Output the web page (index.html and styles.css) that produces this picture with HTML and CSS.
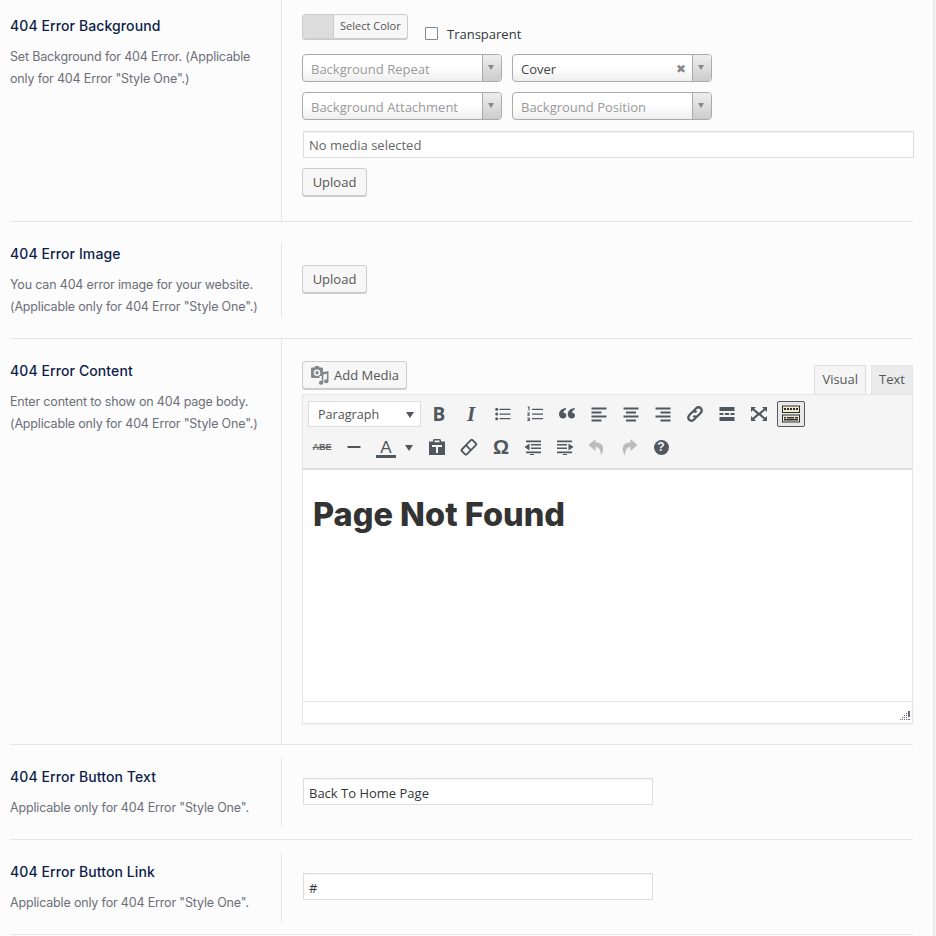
FILE: index.html
```html
<!DOCTYPE html>
<html lang="en">
<head>
  <meta charset="UTF-8">
  <meta name="viewport" content="width=device-width, initial-scale=1.0">
  <title>404 Error Settings</title>
  <link rel="stylesheet" href="styles.css">
</head>
<body>
  <div class="page">

    <section class="row row-background">
      <div class="label">
        <h3>404 Error Background</h3>
        <p>Set Background for 404 Error. (Applicable only for 404 Error "Style One".)</p>
      </div>
      <div class="field">
        <div class="color-line">
          <div class="color-button"><span class="swatch"></span><span class="color-text">Select Color</span></div>
          <label class="check"><span class="checkbox"></span>Transparent</label>
        </div>
        <div class="select-grid">
          <div class="select placeholder"><span class="select-text">Background Repeat</span><span class="select-arrow"></span></div>
          <div class="select"><span class="select-text">Cover</span><span class="select-clear">✖</span><span class="select-arrow"></span></div>
          <div class="select placeholder"><span class="select-text">Background Attachment</span><span class="select-arrow"></span></div>
          <div class="select placeholder"><span class="select-text">Background Position</span><span class="select-arrow"></span></div>
        </div>
        <div class="input input-full muted">No media selected</div>
        <button class="btn">Upload</button>
      </div>
    </section>

    <section class="row row-image">
      <div class="label">
        <h3>404 Error Image</h3>
        <p>You can 404 error image for your website. (Applicable only for 404 Error "Style One".)</p>
      </div>
      <div class="field field-center">
        <button class="btn">Upload</button>
      </div>
    </section>

    <section class="row row-content">
      <div class="label">
        <h3>404 Error Content</h3>
        <p>Enter content to show on 404 page body. (Applicable only for 404 Error "Style One".)</p>
      </div>
      <div class="field field-editor">
        <div class="editor-top">
          <button class="btn btn-media">
            <svg class="media-icon" viewBox="0 0 20 20"><path d="M13 11V3.500a1 1 0 0 0-1-1H9.600L8.600 1H5.400l-1 1.500H2a1 1 0 0 0-1 1V12a1 1 0 0 0 1 1h7.500v-2zM7 11a3.300 3.300 0 1 1 0-6.600A3.300 3.300 0 0 1 7 11z"/><circle cx="7" cy="7.700" r="1.700"/><path d="M18.500 5.500v10.300a2.200 2 0 1 1-1.600-1.900V8.200l-3.600.8v8.300a2.200 2 0 1 1-1.600-1.900v-4l.2-4.600z" transform="translate(0 .5)"/></svg>
            Add Media
          </button>
          <div class="tabs">
            <span class="tab tab-active">Visual</span>
            <span class="tab">Text</span>
          </div>
        </div>
        <div class="toolbar">
          <div class="tool-row">
            <div class="format-select">Paragraph<span class="format-arrow"></span></div>
            <span class="tool tool-b">B</span>
            <span class="tool tool-i">I</span>
            <span class="tool"><svg viewBox="0 0 20 20"><path d="M6.500 4.700h11V6h-11zM6.500 9.400h11v1.300h-11zM6.500 14h11v1.300h-11z"/><circle cx="3.700" cy="5.300" r="1.500"/><circle cx="3.700" cy="10" r="1.500"/><circle cx="3.700" cy="14.700" r="1.500"/></svg></span>
            <span class="tool"><svg viewBox="0 0 20 20"><path d="M7 4.700h11V6H7zM7 9.400h11v1.300H7zM7 14h11v1.300H7z"/><path d="M3 2.500h1.500v4H3.400V3.800H2.600zM2.300 8.500h2.500v1l-1.300 1.200h1.300v1H2.300v-1l1.300-1.200H2.300zM2.300 13.500h2.500V17H2.300v-.9h1.400v-.4H2.800v-.8h.9v-.5H2.300z"/></svg></span>
            <span class="tool"><svg viewBox="0 0 20 20"><path d="M9 4v1.600C7.300 6.300 6.500 7.400 6.300 8.800 8 8.500 9.300 9.800 9.300 11.500c0 1.800-1.400 3.100-3.200 3.100C3.900 14.600 2 12.900 2 10.300 2 7 4.800 4.500 9 4zM17.700 4v1.600c-1.700.7-2.500 1.800-2.700 3.200 1.700-.3 3 1 3 2.700 0 1.800-1.400 3.100-3.200 3.100-2.200 0-4.100-1.700-4.100-4.300 0-3.300 2.800-5.800 7-6.300z"/></svg></span>
            <span class="tool"><svg viewBox="0 0 20 20"><path d="M2.500 3.500h15v2h-15zM2.500 7.500h10v2h-10zM2.500 11.500h15v2h-15zM2.500 15.500h10v2h-10z"/></svg></span>
            <span class="tool"><svg viewBox="0 0 20 20"><path d="M2.500 3.500h15v2h-15zM5 7.500h10v2H5zM2.500 11.500h15v2h-15zM5 15.500h10v2H5z"/></svg></span>
            <span class="tool"><svg viewBox="0 0 20 20"><path d="M2.500 3.500h15v2h-15zM7.500 7.500h10v2h-10zM2.500 11.500h15v2h-15zM7.500 15.500h10v2h-10z"/></svg></span>
            <span class="tool"><svg class="line line-heavy" viewBox="0 0 20 20"><path d="M8.300 7.200l2.900-3a3.200 3.200 0 0 1 4.600 4.600l-2.900 2.900a3.200 3.200 0 0 1-4.500 0"/><path d="M11.700 12.800l-2.900 3a3.200 3.200 0 0 1-4.600-4.600l2.900-2.900a3.200 3.200 0 0 1 4.500 0"/></svg></span>
            <span class="tool"><svg viewBox="0 0 20 20"><path d="M2.500 3h15v4h-15zM2.500 13h15v4h-15z"/><path d="M2.500 9h4v2h-4zM8 9h4v2H8zM13.500 9h4v2h-4z"/></svg></span>
            <span class="tool"><svg viewBox="0 0 20 20"><path d="M2 3h5L5.200 4.800 10 8.800 14.800 4.800 13 3h5v5l-1.800-1.800L12 10l4.200 3.800L18 12v5h-5l1.800-1.800L10 11.200 5.200 15.200 7 17H2v-5l1.800 1.800L8 10 3.800 6.200 2 8z"/></svg></span>
            <span class="tool tool-active"><svg viewBox="0 0 20 20"><path d="M1 1.500h18v7.500H1zM1 10.500h18v8H1z" fill="#2b2f33"/><path d="M2 2.500h16v5.500H2zM2 11.500h16v6H2z" fill="#f5e9c8"/><path d="M3 4h2v2H3zM6 4h2v2H6zM9 4h2v2H9zM12 4h2v2h-2zM15 4h2v2h-2zM3 13h2v1.500H3zM6 13h7v1.500H6zM14 13h3v1.500h-3zM3 15h14v1.500H3z" fill="#2b2f33"/></svg></span>
          </div>
          <div class="tool-row">
            <span class="tool tool-abe">ABE</span>
            <span class="tool"><svg viewBox="0 0 20 20"><path d="M3.500 9h13v2h-13z"/></svg></span>
            <span class="tool tool-color">A</span>
            <span class="color-arrow"></span>
            <span class="tool"><svg viewBox="0 0 20 20"><path d="M2 4.500h4v-1C6 2.700 6.700 2 7.500 2h5c.8 0 1.500.7 1.500 1.500v1h4V18H2z"/><path d="M7.500 3.400h5v1.800h-5zM5 8h10v2h-4v6H9v-6H5z" fill="#f5f5f5"/></svg></span>
            <span class="tool"><svg class="line" viewBox="0 0 20 20"><path d="M2.800 12.500l9-9.300c.6-.5 1.300-.5 1.800 0l3.300 3.300c.5.5.5 1.200 0 1.700l-9.200 9.100c-.4.4-1.100.4-1.600 0l-3.300-3.300c-.5-.5-.5-1.100 0-1.500z"/><path d="M7 8.200l5 5.200"/></svg></span>
            <span class="tool tool-omega">Ω</span>
            <span class="tool"><svg viewBox="0 0 20 20"><path d="M3 3.500h15v1.800H3zM8 7h10v1.500H8zM8 10.500h10V12H8zM3 14.500h15v1.800H3zM7 17h4v1H7zM6.500 6.500v7L1.500 10z"/></svg></span>
            <span class="tool"><svg viewBox="0 0 20 20"><path d="M2 3.500h15v1.800H2zM2 7h10v1.500H2zM2 10.500h10V12H2zM2 14.500h15v1.800H2zM8 17h4v1H8zM13.500 6.500v7l5-3.500z"/></svg></span>
            <span class="tool tool-off"><svg viewBox="0 0 20 20"><path d="M8.500 2L1.500 8l7 6v-4c3.300 0 5 2 5.500 8.500 3.500-5 3.800-13-5.500-13z"/></svg></span>
            <span class="tool tool-off"><svg viewBox="0 0 20 20"><path d="M11.500 2l7 6-7 6v-4C8.200 10 6.500 12 6 18.500 2.500 13.500 2.200 5.500 11.500 5.500z"/></svg></span>
            <span class="tool"><span class="help">?</span></span>
          </div>
        </div>
        <div class="editor-body">
          <h1>Page Not Found</h1>
        </div>
        <div class="editor-status">
          <svg class="resize" viewBox="0 0 10 10"><path d="M8 0h2v2H8zM6 2h1v1H6zM8 2h2v2H8zM4 4h1v1H4zM6 4h1v1H6zM8 4h2v2H8zM2 6h1v1H2zM4 6h1v1H4zM6 6h1v1H6zM0 8h1v1H0zM2 8h1v1H2zM4 8h1v1H4zM6 8h1v1H6zM8 8h2v1H8z"/></svg>
        </div>
      </div>
    </section>

    <section class="row row-text">
      <div class="label">
        <h3>404 Error Button Text</h3>
        <p>Applicable only for 404 Error "Style One".</p>
      </div>
      <div class="field field-center">
        <div class="input input-half">Back To Home Page</div>
      </div>
    </section>

    <section class="row row-text">
      <div class="label">
        <h3>404 Error Button Link</h3>
        <p>Applicable only for 404 Error "Style One".</p>
      </div>
      <div class="field field-center">
        <div class="input input-half">#</div>
      </div>
    </section>

  </div>
</body>
</html>
```

FILE: styles.css
```css
* {
  box-sizing: border-box;
}

body {
  margin: 0;
  background-color: #f1f1f1;
  font-family: "Open Sans", sans-serif;
  font-size: 13px;
  color: #32373c;
}

.page {
  width: 934px;
  height: 936px;
  padding: 0 20px 0 10px;
  background-color: #fcfcfc;
  border-right: 1px solid #e5e5e5;
  overflow: hidden;
}

/* rows */
.row {
  display: flex;
  border-bottom: 1px solid #e6e6e6;
}

.row-background {
  height: 222px;
}

.row-image {
  height: 117px;
  padding: 20px 0;
}

.row-content {
  height: 406px;
}

.row-text {
  height: 95px;
  padding: 12px 0;
}

.label {
  width: 272px;
  flex-shrink: 0;
  padding-right: 14px;
  border-right: 1px solid #e6e6e6;
}

.row-background .label {
  padding-top: 15px;
}

.row-image .label {
  padding-top: 1px;
}

.row-content .label {
  padding-top: 21px;
}

.row-text .label {
  padding-top: 9px;
}

.label h3 {
  margin: 0 0 9px;
  font-family: Inter, sans-serif;
  font-size: 14px;
  font-weight: 500;
  line-height: 22px;
  letter-spacing: 0.1px;
  color: #0e1d4a;
}

.label p {
  margin: 0;
  font-family: Inter, sans-serif;
  font-size: 12.500px;
  line-height: 22px;
  letter-spacing: -0.17px;
  color: #6d6e78;
}

.field {
  flex: 1;
  padding-left: 20px;
}

.field-center {
  display: flex;
  align-items: center;
  padding-bottom: 2px;
}

.row-background .field {
  padding-top: 14px;
}

/* color picker line */
.color-line {
  display: flex;
  align-items: flex-start;
  height: 26px;
}

.color-button {
  display: flex;
  width: 106px;
  height: 25px;
  background-color: #f7f7f7;
  border: 1px solid #ccc;
  border-radius: 3px;
  box-shadow: 0 1px 0 #ccc;
  overflow: hidden;
}

.swatch {
  width: 31px;
  background-color: #dcdcdc;
  border-right: 1px solid #ccc;
}

.color-text {
  padding-left: 6px;
  font-size: 11px;
  line-height: 22px;
  color: #555;
}

.check {
  display: flex;
  align-items: center;
  height: 13px;
  margin: 13px 0 0 17px;
  color: #32373c;
}

.checkbox {
  width: 13px;
  height: 13px;
  margin-right: 9px;
  background-color: #fff;
  border: 1px solid #7e8993;
  border-radius: 1px;
}

/* selects */
.select-grid {
  display: grid;
  grid-template-columns: 200px 200px;
  gap: 10px;
  margin-top: 14px;
}

.select {
  display: flex;
  align-items: center;
  height: 28px;
  padding-left: 8px;
  background: linear-gradient(#fff 50%, #eee);
  border: 1px solid #aaa;
  border-radius: 4px;
  font-size: 13px;
  color: #444;
  overflow: hidden;
}

.placeholder {
  color: #999;
}

.select-text {
  flex: 1;
  padding-top: 1px;
}

.select-clear {
  margin-right: 6px;
  font-size: 12px;
  color: #888;
}

.select-arrow {
  position: relative;
  width: 19px;
  height: 100%;
  background: linear-gradient(#eee, #ccc);
  border-left: 1px solid #aaa;
}

.select-arrow::after {
  content: "";
  position: absolute;
  top: 10px;
  left: 5px;
  border-top: 5px solid #888;
  border-left: 3px solid transparent;
  border-right: 3px solid transparent;
}

/* inputs and buttons */
.input {
  height: 27px;
  padding-left: 5px;
  background-color: #fff;
  border: 1px solid #ddd;
  box-shadow: inset 0 1px 1px rgba(0, 0, 0, 0.04);
  line-height: 27px;
  color: #32373c;
}

.input-half {
  width: 350px;
  margin-left: 1px;
  line-height: 28px;
}

.input-full {
  width: 611px;
  margin: 11px 0 10px 1px;
}

.muted {
  color: #666;
}

.btn {
  display: block;
  width: 65px;
  height: 28px;
  padding: 0;
  background-color: #f7f7f7;
  border: 1px solid #ccc;
  border-radius: 3px;
  box-shadow: 0 1px 0 #ccc;
  font-family: "Open Sans", sans-serif;
  font-size: 13px;
  color: #555;
}

/* editor */
.field-editor {
  padding-top: 22px;
}

.editor-top {
  display: flex;
  justify-content: space-between;
  align-items: flex-end;
  height: 33px;
}

.btn-media {
  display: flex;
  align-items: center;
  width: 105px;
  margin-bottom: 5px;
  padding-left: 7px;
}

.media-icon {
  width: 20px;
  height: 20px;
  margin-right: 4px;
  fill: #82878c;
}

.tabs {
  display: flex;
  gap: 5px;
}

.tab {
  height: 29px;
  padding: 0 7px;
  background-color: #ebebeb;
  border: 1px solid #e5e5e5;
  border-bottom: 0;
  line-height: 26px;
  font-size: 13px;
  color: #555;
}

.tab-active {
  background-color: #f5f5f5;
  border-color: #ddd;
}

.toolbar {
  height: 76px;
  padding: 6px 5px 0;
  background-color: #f5f5f5;
  border: 1px solid #e5e5e5;
  border-bottom: 2px solid #ddd;
}

.tool-row {
  display: flex;
  gap: 4px;
  height: 26px;
  margin-bottom: 7px;
}

.format-select {
  position: relative;
  width: 113px;
  padding-left: 9px;
  background-color: #fff;
  border: 1px solid #ddd;
  font-size: 12.600px;
  line-height: 25px;
  color: #555;
}

.format-arrow {
  position: absolute;
  top: 10px;
  right: 6px;
  border-top: 6px solid #50575e;
  border-left: 4px solid transparent;
  border-right: 4px solid transparent;
}

.tool {
  display: flex;
  align-items: center;
  justify-content: center;
  width: 28px;
  height: 26px;
  font-family: "Liberation Sans", sans-serif;
  color: #50575e;
}

.tool svg {
  width: 20px;
  height: 20px;
  fill: #50575e;
}

.tool svg.line {
  fill: none;
  stroke: #50575e;
  stroke-width: 1.800;
}

.tool svg.line-heavy {
  stroke-width: 2.300;
}

.tool-b {
  font-family: "Open Sans", sans-serif;
  font-size: 19px;
  font-weight: 700;
}

.tool-i {
  font-family: "Liberation Serif", serif;
  font-size: 21px;
  font-weight: 700;
  font-style: italic;
}

.tool-abe {
  font-size: 9px;
  font-weight: 700;
  color: #666;
  text-decoration: line-through;
}

.tool-color {
  position: relative;
  font-size: 17px;
  line-height: 19px;
}

.tool-color::after {
  content: "";
  position: absolute;
  left: 4px;
  right: 4px;
  bottom: 2px;
  height: 3px;
  background-color: #50575e;
}

.color-arrow {
  align-self: center;
  width: 0;
  margin: 2px 6px 0 1px;
  border-top: 6px solid #50575e;
  border-left: 4px solid transparent;
  border-right: 4px solid transparent;
}

.tool-omega {
  font-size: 20px;
  font-weight: 700;
}

.tool-off svg {
  fill: #b9bbbd;
}

.tool-active {
  background-color: #e8e8e8;
  border: 1px solid #50575e;
  border-radius: 2px;
}

.help {
  width: 15px;
  height: 15px;
  background-color: #50575e;
  border-radius: 50%;
  font-size: 12px;
  font-weight: 700;
  line-height: 15px;
  text-align: center;
  color: #f5f5f5;
}

.editor-body {
  width: 611px;
  height: 232px;
  padding: 27px 10px 0;
  background-color: #fff;
  border: 1px solid #e5e5e5;
  border-top: 0;
}

.editor-body h1 {
  margin: 0;
  font-family: Inter, sans-serif;
  font-size: 32.500px;
  font-weight: 800;
  line-height: 36px;
  color: #333;
}

.editor-status {
  position: relative;
  width: 611px;
  height: 22px;
  background-color: #fff;
  border: 1px solid #e5e5e5;
  border-top: 0;
  box-shadow: 0 1px 1px rgba(0, 0, 0, 0.04);
}

.resize {
  position: absolute;
  right: 2px;
  bottom: 2px;
  width: 10px;
  height: 10px;
  fill: #6b6b78;
}
```
